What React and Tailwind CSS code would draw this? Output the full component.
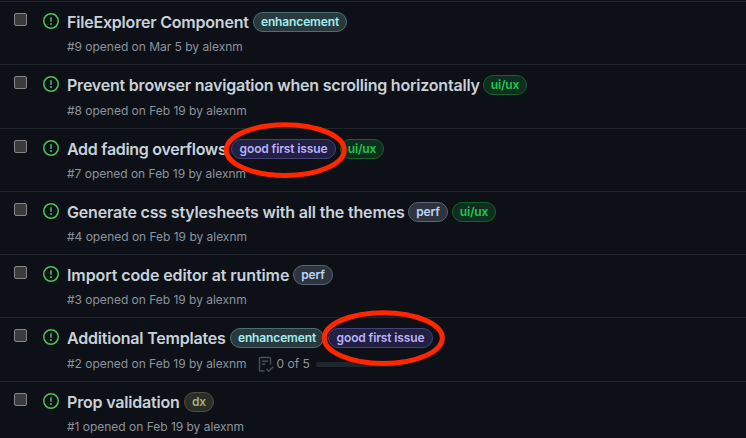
const enhancement = { text: "enhancement", style: "w-[94px] text-[#a2eeef] bg-[#293a3f] border-[#4b6e73]" };
const uiux = { text: "ui/ux", style: "w-11 text-[#1fc94f] bg-[#0e2f1f] border-[#116329]" };
const firstIssue = { text: "good first issue", style: "w-[105px] text-[#bcb1f8] bg-[#211f42] border-[#464277]" };
const perf = { text: "perf", style: "w-10 text-[#bfd4f2] bg-[#2d333f] border-[#596475]" };
const dx = { text: "dx", style: "w-[30px] text-[#adad78] bg-[#2b2e26] border-[#4f513b]" };

const issues = [
  { id: 9, date: "Mar 5", title: "FileExplorer Component", row: "h-[63px]", titleStyle: "w-[186px] tracking-[-0.2px]", meta: "mt-[7px]", labels: [enhancement] },
  { id: 8, date: "Feb 19", title: "Prevent browser navigation when scrolling horizontally", row: "h-16", titleStyle: "w-[416px] tracking-[-0.21px]", meta: "mt-2", labels: [uiux] },
  { id: 7, date: "Feb 19", title: "Add fading overflows", row: "h-[63px]", titleStyle: "w-[164px] tracking-[-0.29px]", meta: "mt-[7px]", labels: [firstIssue, uiux] },
  { id: 4, date: "Feb 19", title: "Generate css stylesheets with all the themes", row: "h-[63px]", titleStyle: "w-[341px] tracking-[-0.17px]", meta: "mt-[7px]", labels: [perf, uiux] },
  { id: 3, date: "Feb 19", title: "Import code editor at runtime", row: "h-[63px]", titleStyle: "w-[226px] tracking-[-0.1px]", meta: "mt-[7px]", labels: [perf] },
  { id: 2, date: "Feb 19", title: "Additional Templates", row: "h-16", titleStyle: "w-[163px] tracking-[-0.2px]", meta: "mt-2", labels: [enhancement, firstIssue], tasks: true },
  { id: 1, date: "Feb 19", title: "Prop validation", row: "h-[63px]", titleStyle: "w-[117px] tracking-[-0.19px]", meta: "mt-[7px]", labels: [dx] },
];

function OpenIcon() {
  return (
    <svg className="ml-4 mt-[11px] h-4 w-4 shrink-0" viewBox="0 0 16 16" fill="none" stroke="#4ac15a" strokeWidth="1.5">
      <circle cx="8" cy="8" r="7.25" />
      <path d="M8 4.75v3.5" strokeLinecap="round" />
      <circle cx="8" cy="11" r="1" fill="#4ac15a" stroke="none" />
    </svg>
  );
}

function Tasks() {
  return (
    <>
      <svg className="ml-[11px] h-4 w-4 shrink-0" viewBox="0 0 16 16" fill="none" stroke="#484f58" strokeWidth="1.4">
        <path d="M6.5 15H2.3a.8.8 0 0 1-.8-.8V2.3a.8.8 0 0 1 .8-.8h9.4a.8.8 0 0 1 .8.8v6.2M4 5.3h6M4 8.3h3.2M8.3 12.8l2.4 2.4 4.5-4.5" />
      </svg>
      <span className="ml-[3px] w-[33px]">0 of 5</span>
      <span className="ml-1.5 h-[5px] w-20 rounded-full bg-[#21262d]" />
    </>
  );
}

function Ring({ className }) {
  return (
    <svg className={`pointer-events-none absolute h-[58px] w-[124px] ${className}`} viewBox="0 0 124 58">
      <ellipse cx="62.3" cy="29.1" rx="59" ry="25.4" fill="none" stroke="#ff2600" strokeWidth="5" />
    </svg>
  );
}

export default function App() {
  return (
    <div className="relative h-[438px] w-[746px] overflow-hidden bg-[#0d1117] pt-px font-['Inter',sans-serif]">
      {issues.map((issue) => (
        <div key={issue.id} className={`flex items-start border-t border-[#21262d] pl-3.5 ${issue.row}`}>
          <span className="mt-[11px] h-[13px] w-[13px] shrink-0 rounded-[2px] border border-[#858585] bg-[#3b3b3b]" />
          <OpenIcon />
          <div className="ml-2 pt-2.5">
            <div className="flex h-5 items-center">
              <span className={`shrink-0 whitespace-nowrap text-base leading-5 font-semibold text-[#c9d1d9] ${issue.titleStyle}`}>{issue.title}</span>
              <span className="flex gap-1">
                {issue.labels.map((label) => (
                  <span key={label.text} className={`flex h-5 items-center justify-center rounded-full border text-xs font-semibold tracking-[-0.13px] whitespace-nowrap ${label.style}`}>
                    {label.text}
                  </span>
                ))}
              </span>
            </div>
            <div className={`flex h-4 items-center text-xs leading-4 tracking-[-0.02px] whitespace-nowrap text-[#8b949e] ${issue.meta}`}>
              <span>#{issue.id} opened on {issue.date} by alexnm</span>
              {issue.tasks && <Tasks />}
            </div>
          </div>
        </div>
      ))}
      <Ring className="top-[121px] left-[223px]" />
      <Ring className="top-[309px] left-[321px]" />
    </div>
  );
}
